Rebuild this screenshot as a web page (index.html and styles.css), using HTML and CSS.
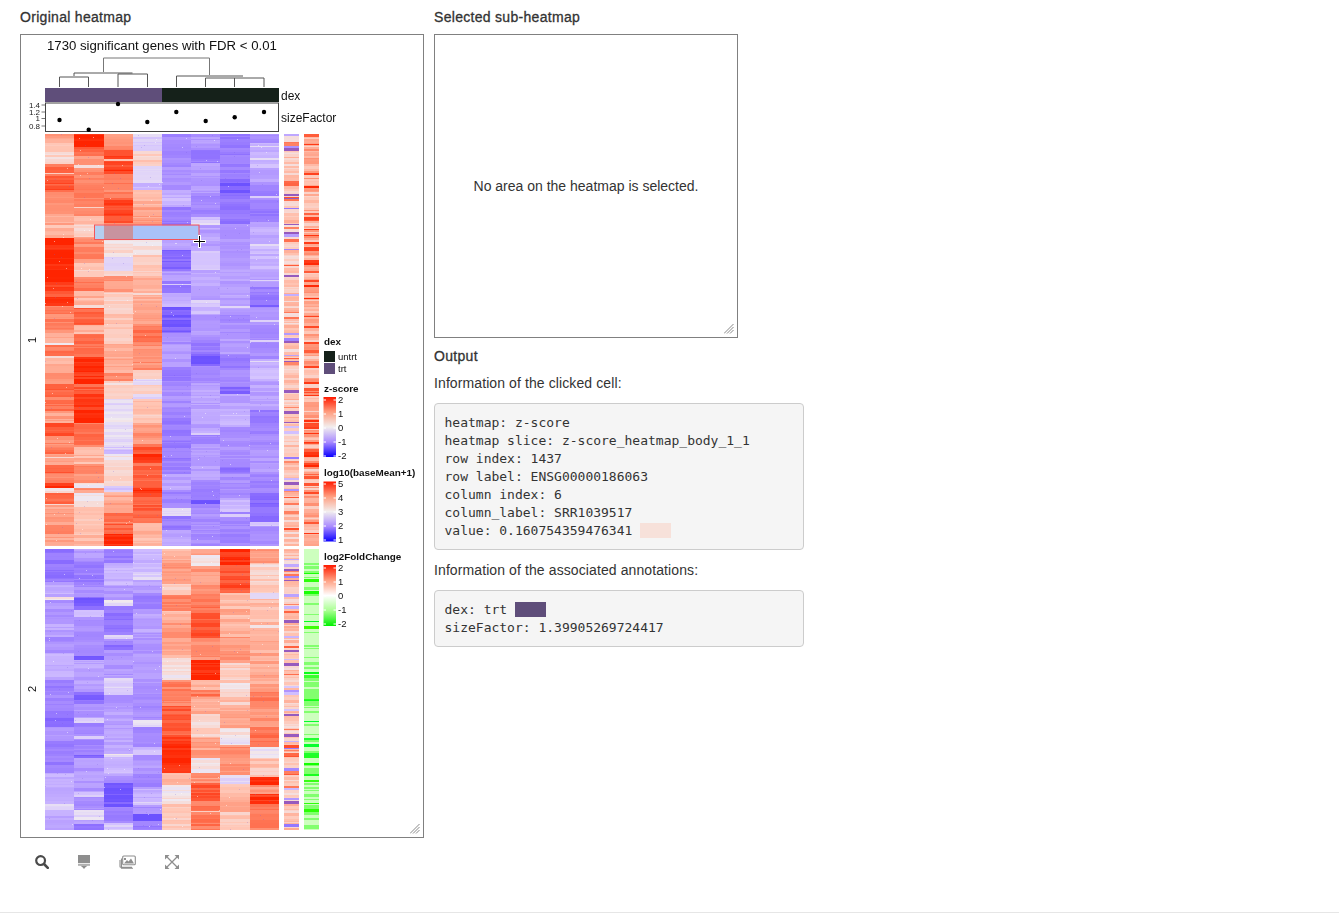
FILE: index.html
```html
<!DOCTYPE html>
<html lang="en">
<head>
<meta charset="utf-8">
<title>Interactive heatmap</title>
<link rel="stylesheet" href="styles.css">
</head>
<body>
<div class="page">
  <section class="col-left">
    <h5 class="title">Original heatmap</h5>
    <div class="plot-box plot-main">
      <canvas id="heat" class="heat" width="402" height="802"></canvas>
      <svg class="overlay" viewBox="21 35 402 802" width="402" height="802">
        <defs>
          <linearGradient id="gz" x1="0" y1="0" x2="0" y2="1">
            <stop offset="0" stop-color="#ff1a00"/><stop offset="0.25" stop-color="#ff9e80"/><stop offset="0.5" stop-color="#f2eeee"/><stop offset="0.75" stop-color="#a98bff"/><stop offset="1" stop-color="#0a00ff"/>
          </linearGradient>
          <linearGradient id="gf" x1="0" y1="0" x2="0" y2="1">
            <stop offset="0" stop-color="#ff1a00"/><stop offset="0.25" stop-color="#ff9e80"/><stop offset="0.5" stop-color="#ffffff"/><stop offset="0.75" stop-color="#a8ff90"/><stop offset="1" stop-color="#00f000"/>
          </linearGradient>
        </defs>
        <text class="t-title" x="47" y="50">1730 significant genes with FDR &lt; 0.01</text>
        <g class="dend">
          <path class="dend-a" d="M103.5 72V58H209.5V75"/>
          <path class="dend-b" d="M74 76V73H132.5"/>
          <path class="dend-b" d="M59.5 87V77H88.5V87"/>
          <path class="dend-b" d="M118 87V74H147.5V87"/>
          <path class="dend-b" d="M176.5 87V76H243"/>
          <path class="dend-b" d="M205.5 87V78H264V87M234.5 87V78"/>
        </g>
        <rect class="c-trt" x="45" y="88" width="117" height="14"/>
        <rect class="c-untrt" x="162" y="88" width="117" height="14"/>
        <text class="t-lab" x="281" y="99.5">dex</text>
        <rect class="sf-box" x="45.5" y="103" width="233" height="28.5"/>
        <g class="dots">
          <circle cx="59.5" cy="120" r="2.2"/><circle cx="88.7" cy="129.7" r="2.2"/><circle cx="118" cy="104" r="2.2"/><circle cx="147.3" cy="122" r="2.2"/>
          <circle cx="176.3" cy="112" r="2.2"/><circle cx="205.7" cy="121" r="2.2"/><circle cx="234.7" cy="117.3" r="2.2"/><circle cx="264" cy="112" r="2.2"/>
        </g>
        <path class="ticks" d="M41.5 105H45M41.5 112H45M41.5 118.5H45M41.5 126H45"/>
        <text class="t-axis" x="40" y="108">1.4</text>
        <text class="t-axis" x="40" y="115">1.2</text>
        <text class="t-axis" x="40" y="121">1</text>
        <text class="t-axis" x="40" y="128.5">0.8</text>
        <text class="t-lab" x="281" y="121.5">sizeFactor</text>
        <text class="t-slice" transform="translate(36 340) rotate(-90)">1</text>
        <text class="t-slice" transform="translate(36 689) rotate(-90)">2</text>

        <rect class="sel-a" x="95" y="225.5" width="9" height="14"/>
        <rect class="sel-b" x="104" y="225.5" width="29" height="14"/>
        <rect class="sel-c" x="133" y="225.5" width="66" height="14"/>
        <rect class="sel-border" x="94.5" y="225" width="104.5" height="14.5"/>
        <path class="cross-w" d="M199.5 235V248M193 241.5H206"/>
        <path class="cross-k" d="M199.5 236V247M194 241.5H205"/>

        <text class="t-leg" x="324" y="345">dex</text>
        <rect class="c-untrt" x="324" y="351" width="11" height="11"/>
        <rect class="c-trt" x="324" y="363" width="11" height="11"/>
        <text class="t-tick" x="338" y="360">untrt</text>
        <text class="t-tick" x="338" y="372">trt</text>

        <text class="t-leg" x="324" y="392">z-score</text>
        <rect fill="url(#gz)" x="323.5" y="397" width="12.5" height="60"/>
        <path class="bar-ticks" d="M323.5 400H326M333.5 400H336M323.5 414H326M333.5 414H336M323.5 428H326M333.5 428H336M323.5 442H326M333.5 442H336M323.5 456H326M333.5 456H336"/>
        <text class="t-tick" x="338" y="403">2</text>
        <text class="t-tick" x="338" y="417">1</text>
        <text class="t-tick" x="338" y="431">0</text>
        <text class="t-tick" x="338" y="445">-1</text>
        <text class="t-tick" x="338" y="459">-2</text>

        <text class="t-leg" x="324" y="476">log10(baseMean+1)</text>
        <rect fill="url(#gz)" x="323.5" y="481.5" width="12.5" height="60"/>
        <path class="bar-ticks" d="M323.5 484H326M333.5 484H336M323.5 498H326M333.5 498H336M323.5 512H326M333.5 512H336M323.5 526H326M333.5 526H336M323.5 540H326M333.5 540H336"/>
        <text class="t-tick" x="338" y="487">5</text>
        <text class="t-tick" x="338" y="501">4</text>
        <text class="t-tick" x="338" y="515">3</text>
        <text class="t-tick" x="338" y="529">2</text>
        <text class="t-tick" x="338" y="543">1</text>

        <text class="t-leg" x="324" y="560">log2FoldChange</text>
        <rect fill="url(#gf)" x="323.5" y="565" width="12.5" height="61"/>
        <path class="bar-ticks" d="M323.5 568H326M333.5 568H336M323.5 582H326M333.5 582H336M323.5 596H326M333.5 596H336M323.5 610H326M333.5 610H336M323.5 624H326M333.5 624H336"/>
        <text class="t-tick" x="338" y="571">2</text>
        <text class="t-tick" x="338" y="585">1</text>
        <text class="t-tick" x="338" y="599">0</text>
        <text class="t-tick" x="338" y="613">-1</text>
        <text class="t-tick" x="338" y="627">-2</text>
      </svg>
      <svg class="grip" viewBox="0 0 10 10" width="10" height="10"><path d="M0 9.5L9.5 0M3 9.5L9.5 3M6 9.5L9.5 6"/></svg>
    </div>
    <div class="toolbar">
      <svg class="tool" viewBox="0 0 14 14" width="14" height="14"><circle class="ic-dark" cx="5.6" cy="5.6" r="4.4"/><path class="ic-dark-h" d="M9 9L12.8 12.8"/></svg>
      <svg class="tool" viewBox="0 0 12 14" width="12" height="14"><path class="ic-fill" d="M0 0H12V8.2H0Z"/><path class="ic-pale" d="M0 9H12V10.8H0Z"/><path class="ic-fill" d="M2.5 10.8H9.5L7.5 12.2 6 14 4.5 12.2Z"/></svg>
      <svg class="tool" viewBox="0 0 17 14" width="17" height="14"><rect class="ic-line" x="3.7" y="1" width="12.6" height="8.8" rx="1"/><path class="ic-line" d="M1 5V11.5Q1 12.2 1.8 12.2H13M2.5 3.5V13.3H14"/><path class="ic-fill" d="M5 8.5L8 5 9.5 6.5 12 3.5 15 8.5ZM5 3H7V5H5Z"/></svg>
      <svg class="tool" viewBox="0 0 14 14" width="14" height="14"><path class="ic-fill" d="M0 0H4.5L0 4.5ZM14 0V4.5L9.5 0ZM0 14V9.5L4.5 14ZM14 14H9.5L14 9.5Z"/><path class="ic-thin" d="M2 2L12 12M12 2L2 12"/></svg>
    </div>
  </section>
  <section class="col-right">
    <h5 class="title">Selected sub-heatmap</h5>
    <div class="plot-box plot-sub">
      <p class="empty-note">No area on the heatmap is selected.</p>
      <svg class="grip" viewBox="0 0 10 10" width="10" height="10"><path d="M0 9.5L9.5 0M3 9.5L9.5 3M6 9.5L9.5 6"/></svg>
    </div>
    <h5 class="title output-title">Output</h5>
    <p class="info">Information of the clicked cell:</p>
    <pre class="code">heatmap: z-score
heatmap slice: z-score_heatmap_body_1_1
row index: 1437
row label: ENSG00000186063
column index: 6
column_label: SRR1039517
value: 0.160754359476341 <span class="swatch swatch-value">    </span></pre>
    <p class="info">Information of the associated annotations:</p>
    <pre class="code">dex: trt <span class="swatch swatch-trt">    </span>
sizeFactor: 1.39905269724417</pre>
  </section>
</div>
<script src="app.js"></script>
</body>
</html>
```
FILE: styles.css
```css
* { box-sizing: border-box; }
html, body { margin: 0; padding: 0; background: #fff; }
body { font-family: "Liberation Sans", Arial, sans-serif; font-size: 14px; color: #333; overflow: hidden; }
.page { display: flex; gap: 10px; height: 913px; padding: 7px 0 0 20px; border-bottom: 1px solid #e6e6e6; }
.col-left { width: 404px; flex: none; }
.col-right { width: 370px; flex: none; }
.title { margin: 0 0 7px; font-size: 14px; line-height: 20px; font-weight: 400; -webkit-text-stroke: 0.3px #333; letter-spacing: 0.3px; }
.plot-box { position: relative; border: 1px solid #808080; background: #fff; }
.plot-main { width: 404px; height: 804px; }
.plot-sub { width: 304px; height: 304px; display: flex; align-items: center; justify-content: center; }
.heat, .overlay { position: absolute; left: 0; top: 0; display: block; }
.grip { position: absolute; right: 3px; bottom: 3px; }
.grip path { stroke: #888; stroke-width: 1; fill: none; }
.empty-note { margin: 0; line-height: 20px; }
.output-title { margin: 8px 0 7px; }
.info { margin: 0 0 10px; line-height: 20px; letter-spacing: 0.1px; }
.code { margin: 0 0 10px; padding: 9.5px; width: 370px; background: #f5f5f5; border: 1px solid #ccc; border-radius: 4px; font-family: "DejaVu Sans Mono", monospace; font-size: 13px; line-height: 18px; color: #333; }
.swatch-value { background: #f7e1da; }
.swatch-trt { background: #5f4e7a; }
.toolbar { display: flex; gap: 29px; align-items: center; padding: 17px 0 0 15px; }
.tool { display: block; flex: none; }
.ic-dark { fill: none; stroke: #4a4a4a; stroke-width: 2.2; }
.ic-dark-h { fill: none; stroke: #4a4a4a; stroke-width: 2.6; stroke-linecap: round; }
.ic-fill { fill: #8e8e8e; }
.ic-pale { fill: #b0b0b0; }
.ic-line { fill: none; stroke: #8e8e8e; stroke-width: 1.1; }
.ic-thin { fill: none; stroke: #8e8e8e; stroke-width: 1.3; }
.t-title { font-size: 13.2px; fill: #111; }
.t-lab { font-size: 12px; fill: #111; }
.t-axis { font-size: 8px; fill: #222; text-anchor: end; }
.t-slice { font-size: 11px; fill: #111; text-anchor: middle; }
.t-leg { font-size: 9.9px; font-weight: 700; fill: #111; }
.t-tick { font-size: 9.5px; fill: #111; }
.dend-a { fill: none; stroke: #777; stroke-width: 1; }
.dend-b { fill: none; stroke: #555; stroke-width: 1; }
.c-trt { fill: #5f4e7a; }
.c-untrt { fill: #15211a; }
.sf-box { fill: #fff; stroke: #444; stroke-width: 1; }
.dots circle { fill: #000; }
.ticks { stroke: #555; stroke-width: 0.8; fill: none; }
.sel-a { fill: #b4cef0; }
.sel-b { fill: #c8939f; }
.sel-c { fill: #a9c2f8; }
.sel-border { fill: none; stroke: #f4545a; stroke-width: 1; }
.cross-w { stroke: #fff; stroke-width: 3; fill: none; }
.cross-k { stroke: #000; stroke-width: 1; fill: none; }
.bar-ticks { stroke: #fff; stroke-width: 1; fill: none; }
```
FILE: app.js
```js
(function () {
  var canvas = document.getElementById('heat');
  var ctx = canvas.getContext('2d');
  ctx.translate(-21, -35);

  var seed = 20240611;
  function rnd() {
    seed = (seed * 1664525 + 1013904223) >>> 0;
    return seed / 4294967296;
  }

  var stops = [
    [-2, 10, 0, 255], [-1.5, 132, 102, 255], [-1, 170, 142, 255], [-0.5, 210, 192, 255],
    [0, 240, 234, 240], [0.5, 255, 200, 184], [1, 255, 152, 124], [1.5, 255, 100, 66], [2, 255, 36, 0]
  ];
  function colour(v) {
    if (v <= -2) v = -2;
    if (v >= 2) v = 2;
    for (var i = 0; i < stops.length - 1; i++) {
      var a = stops[i], b = stops[i + 1];
      if (v <= b[0]) {
        var t = (v - a[0]) / (b[0] - a[0]);
        return 'rgb(' + Math.round(a[1] + (b[1] - a[1]) * t) + ',' + Math.round(a[2] + (b[2] - a[2]) * t) + ',' + Math.round(a[3] + (b[3] - a[3]) * t) + ')';
      }
    }
    return '#fff';
  }

  var xs = [45, 74, 103.5, 133, 162, 191, 220, 250, 279];
  var slices = [
    { top: 134, bottom: 546, cols: [
      [134,.9,143,.5,150,.3,163,1.4,176,1.6,190,1.2,205,1,215,.8,224,.3,228,.7,237,2,280,1.7,295,1.9,305,1.2,333,.8,342,.1,344,1.3,355,.8,370,1,383,1.5,397,1.3,410,.9,422,1.6,435,1.1,448,1.4,453,.9,463,1.5,473,1.2,483,1.8,488,.1,492,1.4,503,.9,523,1.3,533,.9],
      [134,1.9,145,1.4,155,1,163,.2,167,1.2,215,.7,224,.4,237,1.1,257,.7,270,.4,275,1.2,290,.7,307,1.5,325,.7,333,1.4,355,1.9,383,1.5,392,1.9,410,2,422,1.3,447,.7,463,1.1,482,.05,488,1,493,.1,507,.5,530,.6],
      [134,1.1,150,1.8,172,1.2,197,1.7,222,.9,237,.2,257,-.4,270,.2,275,1,290,.4,313,.5,343,.8,373,1.1,380,.3,397,-.2,410,-.05,423,-.2,447,-.5,453,.1,465,.3,485,-.4,492,.8,513,1.3,523,1.5,533,1.9],
      [134,-.3,150,.4,165,-.2,183,-.6,190,.7,207,.9,224,.7,237,.1,254,.5,277,.8,307,1,325,1.4,342,1.1,370,.3,377,-.2,383,.3,393,-.2,398,.5,422,1,443,1.5,453,1.9,463,1.4,488,1.9,492,1.5,522,.7],
      [134,-1.1,155,-1,190,-.6,207,-1.2,224,-1,240,-.8,250,-1.4,270,-.9,280,-1.2,293,-.7,307,-1.5,333,-1,343,-.8,367,-1.3,380,-1,410,-1.2,473,-.8,490,-1.1,507,-.3,515,-1.2,530,-.8],
      [134,-.9,150,-1.2,163,-.9,193,-1.1,215,-.4,224,-.8,250,-.4,270,-.8,303,-.5,313,-.9,340,-1.2,353,-1.6,365,-1,383,-.8,432,-1.1,443,-.8,480,-1.1,498,-1.6,503,-1],
      [134,-1.2,178,-1.5,193,-1.3,224,-.9,270,-.8,310,-1,337,-.9,353,-1.2,370,-1,387,-1.4,393,-.8,410,-.6,427,-1,467,-1.3,473,-1,497,-.6,510,-1.1],
      [134,-1,142,-.6,167,-.8,180,-1.1,207,-1.2,222,-.7,243,-.6,270,-.9,287,-1.2,304,-1.7,307,-1,357,-.6,380,-.8,410,-1.2,432,-1,447,-.9,473,-1.1,492,-1.4,522,-.3,526,-1]
    ] },
    { top: 549, bottom: 830, cols: [
      [549,-1.3,582,-.7,597,0,600,-.9,617,-.8,637,-1,653,-.7,680,-1.2,690,-1.1,710,-1.4,727,-.9,740,-1.2,773,-.7,803,-.2,810,-.7],
      [549,-.8,560,-1.2,583,-1,597,-1.5,610,-.6,617,-1,655,-1.5,660,-.8,690,-1.4,703,-.9,718,-.3,722,-1.1,753,-1.5,757,-.9,792,-.4,797,-1,810,-.2,818,-.7,823,-1.3],
      [549,-1.2,563,-.6,583,-.9,600,-.1,605,-1.3,633,-.3,638,-1,643,-1.4,650,-.9,678,-.3,690,-.4,695,-1,710,-.8,753,-.1,757,-.6,775,-1,783,-1.6,807,-1.1,823,-.4],
      [549,-.6,570,-.3,580,-.8,593,-1.2,607,-.8,633,-.9,690,-1,720,-.2,727,-1.1,747,-.5,753,-.9,773,-1.1,787,-.7,800,-.3,805,-1,812,-1.6,820,-1.2],
      [549,.7,560,1,582,.3,593,1.2,610,.7,620,1,637,.8,657,.1,680,1.2,690,1.2,706,1.5,737,1.9,758,2,765,1.7,773,.6,783,.1,803,.5],
      [549,.8,555,.05,565,1,593,1.3,613,1.6,637,1.1,658,2,680,.8,690,1.3,697,.8,712,.4,737,.9,758,.1,773,1,783,1.6,800,1.3],
      [549,1.9,565,1.6,593,.6,607,1,613,.7,637,1,663,.4,683,.1,690,.4,697,.8,727,.1,737,-.1,745,1.1,773,-.2,783,.6,800,1,810,.5],
      [549,1,563,.4,593,-.3,597,.6,625,.1,628,.8,690,1.3,707,1,727,1.4,747,-.1,757,.5,773,2,783,1,793,1.8,803,1.2]
    ] }
  ];

  function bandAt(col, y) {
    var v = col[1];
    for (var i = 0; i < col.length; i += 2) {
      if (col[i] <= y) v = col[i + 1];
      else break;
    }
    return v;
  }

  slices.forEach(function (s) {
    s.cols.forEach(function (col, c) {
      var x0 = Math.round(xs[c]), x1 = Math.round(xs[c + 1]);
      var y = s.top;
      while (y < s.bottom) {
        var h = 1 + Math.floor(rnd() * 3);
        h = Math.min(h, s.bottom - y);
        var base = bandAt(col, y);
        var spread = base < 0 ? 0.32 : 0.42;
        var v = base + (rnd() - 0.5) * spread;
        if (rnd() < 0.012) v = base * 0.3;
        if (v < -1.6) v = -1.6;
        ctx.fillStyle = colour(v);
        ctx.fillRect(x0, y, x1 - x0, h);
        y += h;
      }
      var count = Math.round((s.bottom - s.top) * 0.1);
      for (var n = 0; n < count; n++) {
        var px = x0 + Math.floor(rnd() * (x1 - x0));
        var py = s.top + Math.floor(rnd() * (s.bottom - s.top));
        ctx.fillStyle = rnd() < 0.5 ? 'rgba(255,255,255,0.5)' : 'rgba(120,90,220,0.25)';
        ctx.fillRect(px, py, 1, 1);
      }
    });
  });

  function strip(x0, x1, top, bottom, pick) {
    var y = top;
    while (y < bottom) {
      var h = 1 + Math.floor(rnd() * 2.6);
      h = Math.min(h, bottom - y);
      ctx.fillStyle = pick();
      ctx.fillRect(x0, y, x1 - x0, h);
      y += h;
    }
  }

  function meanPick() {
    var r = rnd();
    if (r < 0.1) return colour(-0.4 - rnd() * 0.9);
    if (r < 0.14) return 'rgb(150,90,190)';
    if (r < 0.2) return colour(1.1 + rnd() * 0.6);
    return colour(0.15 + rnd() * 0.65);
  }
  function redPick() {
    var r = rnd();
    if (r < 0.2) return colour(1.5 + rnd() * 0.5);
    return colour(0.3 + rnd() * 0.85);
  }
  function greenPick() {
    var r = rnd();
    if (r < 0.12) return 'rgb(' + Math.round(rnd() * 60) + ',255,' + Math.round(rnd() * 50) + ')';
    if (r < 0.42) return 'rgb(130,255,110)';
    return 'rgb(205,255,190)';
  }

  strip(284, 299, 134, 546, meanPick);
  strip(284, 299, 549, 830, meanPick);
  strip(304, 319, 134, 546, redPick);
  strip(304, 319, 549, 830, greenPick);
})();
```
